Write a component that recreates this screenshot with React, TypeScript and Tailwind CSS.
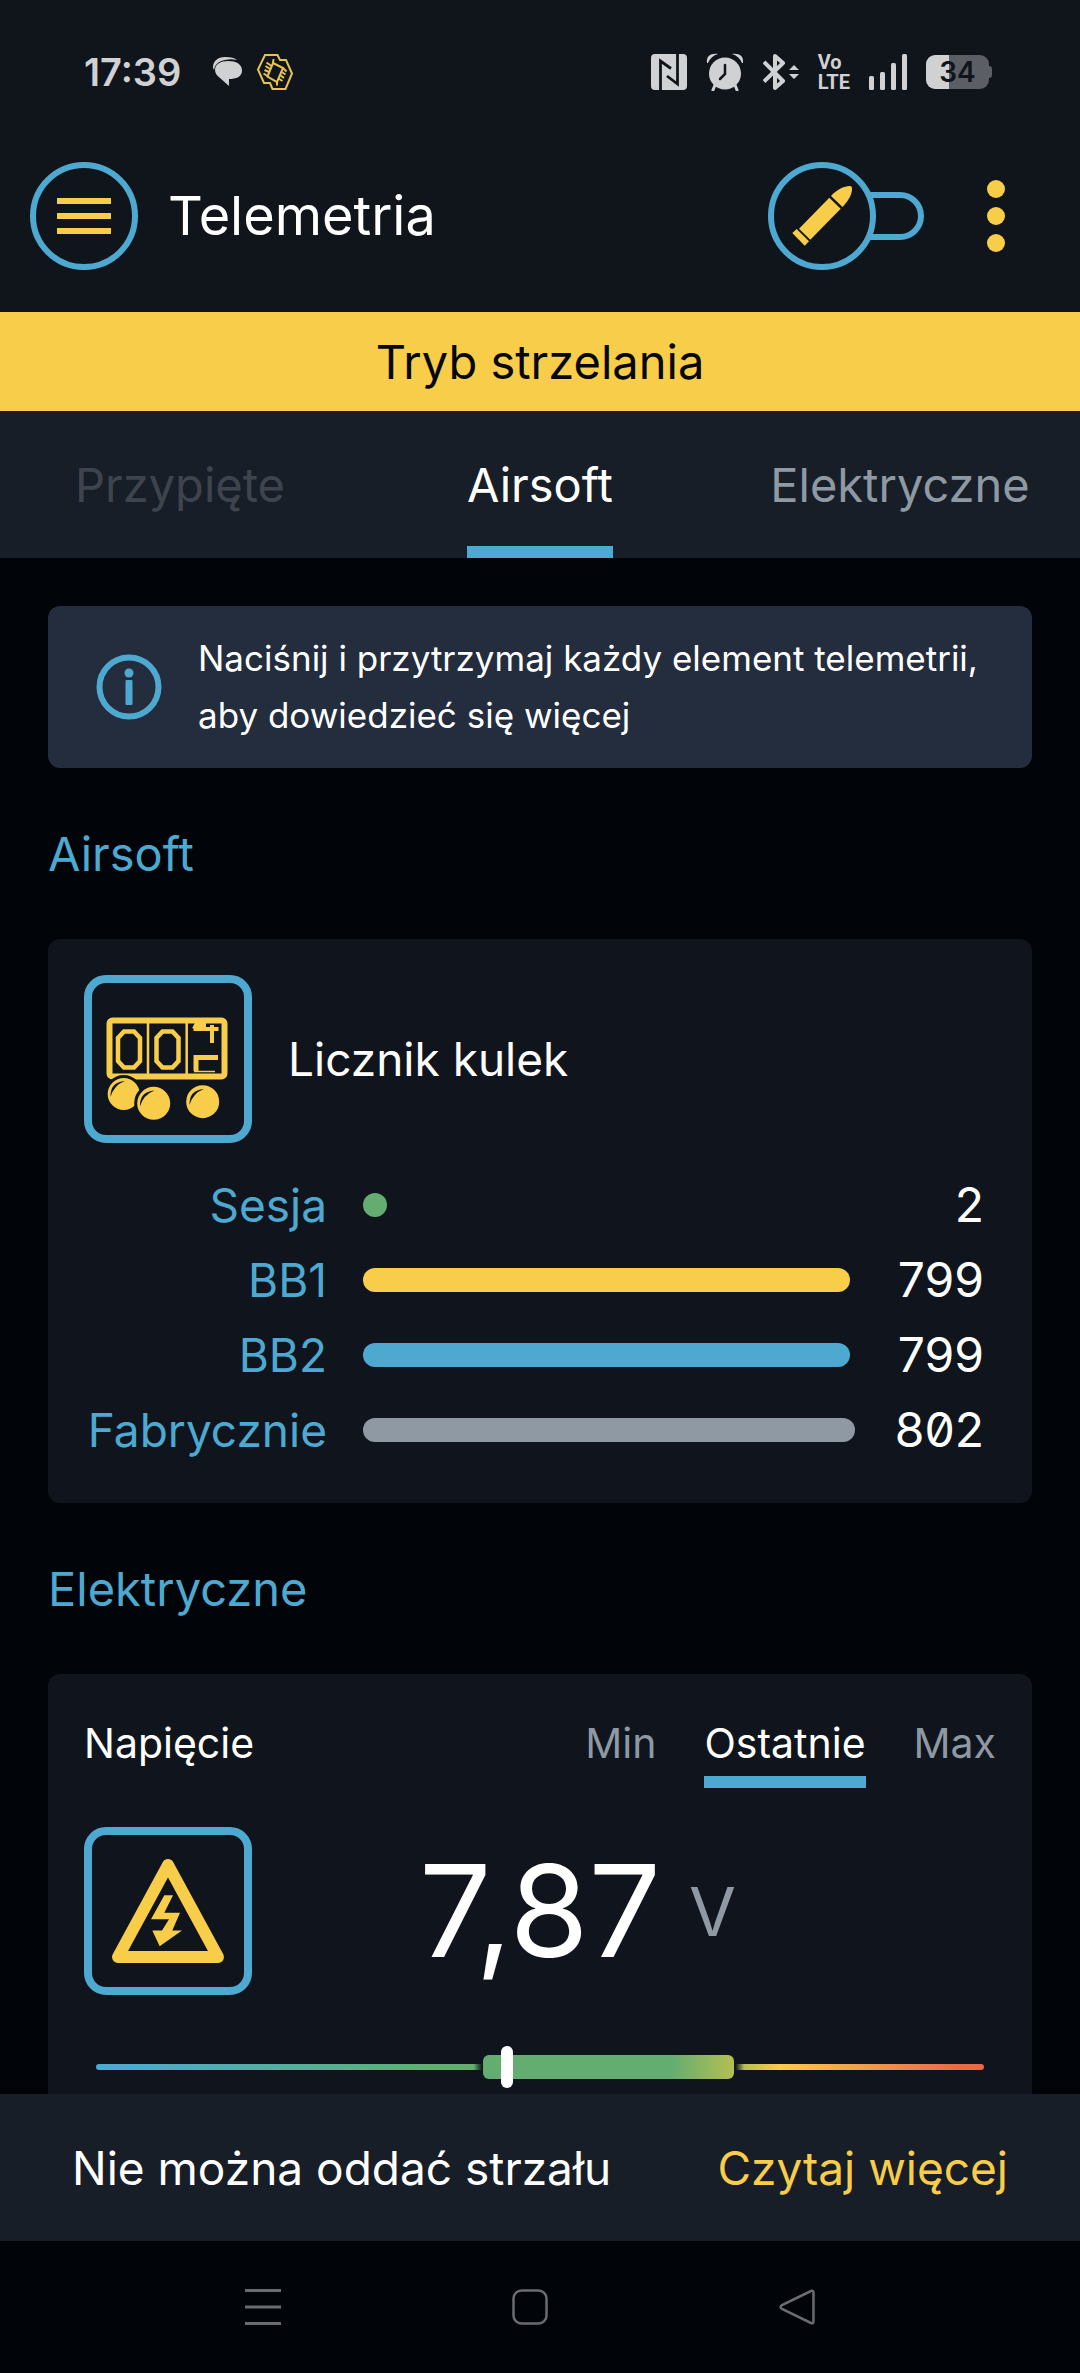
import { useState } from 'react';
import type { ReactNode } from 'react';
import clsx from 'clsx';

interface Counter {
  label: string;
  value: number;
  color: string;
  percent: number;
}

const TABS = [
  { id: 'pinned', label: 'Przypięte', disabled: true },
  { id: 'airsoft', label: 'Airsoft', disabled: false },
  { id: 'electric', label: 'Elektryczne', disabled: false },
];

const COUNTERS: Counter[] = [
  { label: 'Sesja', value: 2, color: 'bg-[#64ad71]', percent: 0 },
  { label: 'BB1', value: 799, color: 'bg-[#f7cd49]', percent: 99 },
  { label: 'BB2', value: 799, color: 'bg-[#4ea9d1]', percent: 99 },
  { label: 'Fabrycznie', value: 802, color: 'bg-[#8e99a4]', percent: 100 },
];

const RANGES = ['Min', 'Ostatnie', 'Max'];

function StatusBar() {
  return (
    <div className="flex h-[120px] items-center justify-between pt-6 pr-[88px] pl-[84px] text-[#d0d1d3]">
      <div className="flex items-center">
        <span className="text-[38px] leading-none font-semibold">17:39</span>
        <svg className="ml-8 h-[30px] w-[30px]" viewBox="0 0 30 30" fill="currentColor">
          <path d="M0 9C1 3 6 0 12 0c6 0 10 1 12 3C20 2 16 2 12 3 6 4 2 7 1 13 0 12 0 10 0 9Z" />
          <path d="M15 4c8 0 14 3 14 9.500S23 22 16 22v7L7 21C4 19 2 16 2 13 2 7 8 4 15 4Z" />
        </svg>
        <svg className="ml-[14px] h-9 w-9" viewBox="0 0 36 36" fill="none" stroke="#e8c250" strokeWidth="2">
          <path d="M8 1H20.500L23 6H29L35 19.500 28.500 35H15.500L13 29H7L1 15.500Z" />
          <path d="M16 9L26 14 20 28 10.500 22.500Z" />
          <path d="M16 9L16.500 5M14.500 12L9.500 8.500M13 15L8.500 12M12 18L7.500 16M10.500 22L6.500 19.500M26 14L29.500 17.500M24.500 18L28.500 20.500M23 21L27 24M21.500 24.500L25.500 27M20 28V31.500" />
        </svg>
      </div>

      <div className="flex items-center gap-[19px]">
        <svg className="h-9 w-9" viewBox="0 0 36 36">
          <rect width="36" height="36" rx="4" fill="currentColor" />
          <path d="M9.500 36V7L20 14.500M16 22L26.500 30V0" fill="none" stroke="#10151c" strokeWidth="2.800" />
        </svg>
        <svg className="h-[38px] w-[38px]" viewBox="0 0 38 38" fill="currentColor">
          <circle cx="19" cy="20.500" r="16" />
          <path d="M1 10C0 3 5 0 12 1Q5 3 2 10ZM37 10C38 3 33 0 26 1Q33 3 36 10Z" />
          <path d="M9 32L7 37M29 32L31 37" stroke="currentColor" strokeWidth="3" strokeLinecap="round" />
          <path d="M19 12V21L14 26" fill="none" stroke="#10151c" strokeWidth="2.500" strokeLinecap="round" />
        </svg>
        <svg className="h-[38px] w-9" viewBox="0 0 36 38" fill="none" stroke="currentColor" strokeWidth="4">
          <path d="M1 9L20 28 12 35V3L20 10 1 28.500" strokeLinejoin="round" />
          <path d="M26 17H36L31 12ZM26 21H36L31 26Z" fill="currentColor" stroke="none" />
        </svg>
        <span className="flex flex-col font-[Roboto,sans-serif] text-[20px] leading-5 font-bold">
          <span>Vo</span>
          <span>LTE</span>
        </span>
        <svg className="h-9 w-[38px]" viewBox="0 0 38 36" fill="currentColor">
          <rect x="0" y="22" width="5" height="14" rx="1.500" />
          <rect x="11" y="18" width="5" height="18" rx="1.500" />
          <rect x="22" y="9" width="5" height="27" rx="1.500" />
          <rect x="33" y="0" width="5" height="36" rx="1.500" />
        </svg>
        <div className="flex items-center">
          <span className="flex h-[34px] w-[63px] items-center justify-center rounded-[9px] bg-[linear-gradient(90deg,#d0d1d3_37%,#5b5e64_37%)] text-[28px] leading-none font-semibold text-[#10151c]">
            34
          </span>
          <span className="h-3 w-[3px] rounded-r-sm bg-[#5b5e64]" />
        </div>
      </div>
    </div>
  );
}

function AppBar() {
  const [armed, setArmed] = useState(false);

  return (
    <div className="flex h-48 items-center pr-[66px] pl-[30px]">
      <button
        aria-label="Menu"
        className="flex h-[108px] w-[108px] flex-col items-center justify-center gap-[9px] rounded-full border-[6px] border-[#4ea9d1]"
      >
        <span className="h-[6px] w-[54px] bg-[#f7cd49]" />
        <span className="h-[6px] w-[54px] bg-[#f7cd49]" />
        <span className="h-[6px] w-[54px] bg-[#f7cd49]" />
      </button>
      <h1 className="ml-[30px] flex-1 text-[54px] leading-none">Telemetria</h1>

      <button aria-label="Tryb strzelania" aria-pressed={armed} onClick={() => setArmed(!armed)}>
        <svg className="h-[108px] w-[156px]" viewBox="0 0 156 108">
          <path d="M96 33H132A21 21 0 0 1 132 75H96" fill="none" stroke="#4ea9d1" strokeWidth="6" />
          <circle cx="54" cy="54" r="51" fill="#10151c" stroke="#4ea9d1" strokeWidth="6" />
          <g fill="#f7cd49">
            <path d="M63 34C68 28 76 24 82 24Q84 24 84 27C84 33 80 39 74.500 45Z" />
            <path d="M61.300 35.700L72.700 46.700 42.300 77.700 31 66.700Z" />
            <path d="M28.700 67L24.300 71 36.700 83.700 41 79.300Z" />
          </g>
        </svg>
      </button>

      <button aria-label="Więcej opcji" className="ml-[54px] flex w-9 flex-col items-center gap-[9px]">
        <span className="h-[18px] w-[18px] rounded-full bg-[#f7cd49]" />
        <span className="h-[18px] w-[18px] rounded-full bg-[#f7cd49]" />
        <span className="h-[18px] w-[18px] rounded-full bg-[#f7cd49]" />
      </button>
    </div>
  );
}

function Tabs() {
  const [active, setActive] = useState('airsoft');

  return (
    <nav className="grid h-[147px] grid-cols-3 bg-[#181e27] text-[47px] leading-none">
      {TABS.map((tab) => (
        <button
          key={tab.id}
          disabled={tab.disabled}
          onClick={() => setActive(tab.id)}
          className={clsx(
            'justify-self-center border-y-12 border-t-transparent',
            active === tab.id && 'border-b-[#4ea9d1] text-white',
            active !== tab.id && 'border-b-transparent',
            active !== tab.id && (tab.disabled ? 'text-[#3d444d]' : 'text-[#8e99a4]'),
          )}
        >
          {tab.label}
        </button>
      ))}
    </nav>
  );
}

function SectionTitle({ children }: { children: ReactNode }) {
  return <h2 className="flex h-[171px] items-center text-[47px] leading-none text-[#4ea9d1]">{children}</h2>;
}

function IconFrame({ children }: { children: ReactNode }) {
  return (
    <span className="flex h-[168px] w-[168px] shrink-0 items-center justify-center rounded-[22px] border-8 border-[#4ea9d1]">
      {children}
    </span>
  );
}

function CounterIcon() {
  return (
    <svg className="h-[152px] w-[152px]" viewBox="8 8 152 152" fill="none" stroke="#f7cd49">
      <rect x="25.500" y="45.500" width="115" height="56" rx="3" strokeWidth="6" />
      <path d="M64 47V100M102.700 47V100" strokeWidth="2.500" />
      <path
        d="M40 56.500H50L56 63V86L50 92.500H40L34 86V63ZM78.500 56.500H88.500L94.500 63V86L88.500 92.500H78.500L72.500 86V63Z"
        strokeWidth="4.500"
      />
      <path d="M109.500 54H134.500M128 50V68M110 54L112 50H122" strokeWidth="4" />
      <path d="M134 82.500H112V96" strokeWidth="5" />
      <path d="M110 96.500H131" strokeWidth="1.500" />
      <g fill="#f7cd49" stroke="#10151c" strokeWidth="3">
        <circle cx="39.700" cy="119" r="17.500" />
        <circle cx="69.700" cy="128.300" r="18" />
        <circle cx="118.700" cy="126.700" r="18" />
      </g>
      <g fill="#10151c" stroke="none">
        <path d="M26.500 122Q26 107 41 106Q30 110 26.500 122Z" />
        <path d="M56 131.500Q55.500 116.500 70.500 115.500Q59.500 119.500 56 131.500Z" />
        <path d="M105.500 130Q105 115 120 114Q109 118 105.500 130Z" />
      </g>
    </svg>
  );
}

function VoltageIcon() {
  return (
    <svg className="h-[152px] w-[152px]" viewBox="8 8 152 152" fill="#f7cd49">
      <path d="M84 38L134 130H34Z" fill="none" stroke="#f7cd49" strokeWidth="12" strokeLinejoin="round" />
      <path d="M80.300 68.300H89L80.300 85.700H96L88.300 103.500H98L75.700 119.300 68.300 103.500H78L85 92.300H67Z" />
    </svg>
  );
}

function CounterCard() {
  return (
    <section className="rounded-xl bg-[#10151d] py-9 pr-12 pl-9">
      <div className="mb-6 flex items-center gap-9">
        <IconFrame>
          <CounterIcon />
        </IconFrame>
        <h3 className="text-[46px] leading-none">Licznik kulek</h3>
      </div>
      <dl className="text-[46px]">
        {COUNTERS.map((counter) => (
          <div key={counter.label} className="flex h-[75px] items-center leading-none">
            <dt className="w-[243px] text-right text-[#4ea9d1]">{counter.label}</dt>
            <dd className="ml-9 flex flex-1 items-center">
              <span className="flex-1">
                <span
                  className={clsx('block h-6 min-w-6 rounded-full', counter.color)}
                  style={{ width: `${counter.percent}%` }}
                />
              </span>
              <span className="w-[129px] text-right text-[48px] slashed-zero">{counter.value}</span>
            </dd>
          </div>
        ))}
      </dl>
    </section>
  );
}

function VoltageCard() {
  const [range, setRange] = useState('Ostatnie');

  return (
    <section className="rounded-xl bg-[#10151d] px-9 pt-9 pb-24">
      <div className="flex h-[78px] justify-between text-[41px] leading-none">
        <h3 className="flex items-center pb-3">Napięcie</h3>
        <div className="flex gap-12">
          {RANGES.map((item) => (
            <button
              key={item}
              onClick={() => setRange(item)}
              className={clsx(
                'border-b-12',
                item === range ? 'border-[#4ea9d1] text-white' : 'border-transparent text-[#8e99a4]',
              )}
            >
              {item}
            </button>
          ))}
        </div>
      </div>

      <div className="mt-[39px] grid grid-cols-[1fr_auto_1fr] items-center gap-7">
        <IconFrame>
          <VoltageIcon />
        </IconFrame>
        <span className="text-[128px] leading-none">7,87</span>
        <span className="text-[68px] leading-none text-[#8e99a4]">V</span>
      </div>

      <div
        role="meter"
        aria-label="Napięcie"
        aria-valuenow={7.87}
        className="relative mx-3 mt-[51px] flex h-[42px] items-center"
      >
        <span className="h-[6px] flex-1 rounded-full bg-[linear-gradient(90deg,#4ea9d1_2%,#64ad71_38%,#64ad71_42.5%,#10151d_43.5%,#10151d_72%,#b6c04f_73%,#f7cd49_77%,#e8694a_97%)]" />
        <span className="absolute left-[43.600%] h-6 w-[28.300%] rounded-md bg-[linear-gradient(90deg,#64ad71_75%,#b4bf50)]" />
        <span className="absolute left-[45.600%] h-[42px] w-3 rounded-full bg-white" />
      </div>
    </section>
  );
}

function SystemNav() {
  return (
    <div className="flex h-[132px] items-center justify-between pr-[265px] pl-[245px] text-[#6a6d70]">
      <button aria-label="Ostatnie aplikacje">
        <svg className="h-9 w-9" viewBox="0 0 36 36" stroke="currentColor" strokeWidth="3">
          <path d="M0 1.500H36M0 18H36M0 34.500H36" />
        </svg>
      </button>
      <button aria-label="Ekran główny">
        <svg className="h-9 w-9" viewBox="0 0 36 36" fill="none" stroke="currentColor" strokeWidth="2.500">
          <rect x="1.500" y="1.500" width="33" height="33" rx="8" />
        </svg>
      </button>
      <button aria-label="Wstecz">
        <svg className="h-9 w-9" viewBox="0 0 36 36" fill="none" stroke="currentColor" strokeWidth="2.500">
          <path d="M32 2L3 16Q0 18 3 20L32 34Q34.500 35 34.500 32V4Q34.500 1 32 2Z" />
        </svg>
      </button>
    </div>
  );
}

export default function App() {
  return (
    <div className="flex h-screen flex-col overflow-hidden bg-[#010409] font-[Inter,sans-serif] text-white">
      <header className="shrink-0 bg-[#10151c]">
        <StatusBar />
        <AppBar />
        <div className="flex h-[99px] items-center justify-center bg-[#f7cd49] text-[47px] leading-none text-[#05070a]">
          Tryb strzelania
        </div>
        <Tabs />
      </header>

      <main className="min-h-0 flex-1 overflow-hidden px-12 pt-12">
        <div className="flex items-center gap-9 rounded-xl bg-[#242d3d] py-6 pr-9 pl-12">
          <svg className="h-[66px] w-[66px] shrink-0" viewBox="0 0 66 66" fill="#4ea9d1">
            <circle cx="33" cy="33" r="29.500" fill="none" stroke="#4ea9d1" strokeWidth="6" />
            <circle cx="33" cy="19" r="4.500" />
            <rect x="29.500" y="26" width="7" height="25" rx="1" />
          </svg>
          <p className="text-[35px] leading-[57px]">
            Naciśnij i przytrzymaj każdy element telemetrii, aby dowiedzieć się więcej
          </p>
        </div>

        <SectionTitle>Airsoft</SectionTitle>
        <CounterCard />
        <SectionTitle>Elektryczne</SectionTitle>
        <VoltageCard />
      </main>

      <footer className="shrink-0">
        <div className="flex h-[147px] items-center justify-between bg-[#181e27] px-[72px] text-[46px] leading-none">
          <p>Nie można oddać strzału</p>
          <button className="text-[#f7cd49]">Czytaj więcej</button>
        </div>
        <SystemNav />
      </footer>
    </div>
  );
}
